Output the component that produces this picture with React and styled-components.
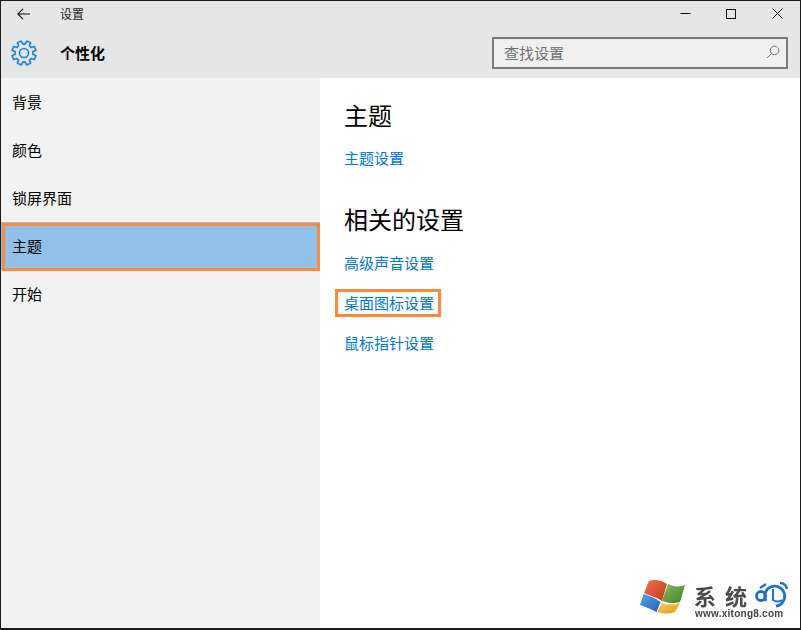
import React from "react";
import styled, { createGlobalStyle } from "styled-components";

const Global = createGlobalStyle`
  html, body { margin: 0; padding: 0; background: #fff; }
  #root { width: 801px; height: 630px; }
  * { box-sizing: border-box; }
`;
const Window = styled.div`
  width: 801px; height: 630px; display: flex; flex-direction: column; position: relative;
  border: 1px solid #1a1a1a; border-bottom-width: 2px; background: #fff; overflow: hidden;
  font-family: "Noto Sans CJK SC", "Noto Sans", sans-serif; color: #000;
`;
const Header = styled.header`
  height: 77px; flex: none; background: #e6e6e6; display: flex; flex-direction: column;
`;
const TitleBar = styled.div`
  height: 25px; display: flex; align-items: center;
`;
const BackButton = styled.div`
  width: 46px; height: 25px; display: flex; align-items: center; justify-content: center; padding-right: 1px;
`;
const TitleText = styled.span`
  margin-left: 13px; font-size: 12px; color: #222; line-height: 25px;
`;
const WindowButtons = styled.div`
  margin-left: auto; display: flex; height: 27px;
`;
const WindowButton = styled.div`
  width: 46px; height: 27px; display: flex; align-items: center; justify-content: center;
`;
const HeadRow = styled.div`
  flex: 1; display: flex; align-items: center; padding: 2px 12px 0 10px;
`;
const PageTitle = styled.h1`
  margin: 0 0 0 23px; font-size: 15px; font-weight: 700; line-height: 20px; color: #000;
`;
const SearchBox = styled.div`
  margin-left: auto; width: 296px; height: 32px; border: 2px solid #7a7a7a; background: #f0f0f0;
  display: flex; align-items: center; justify-content: space-between; padding: 0 6px 2px 10px;
  font-size: 15px; color: #707070;
`;
const Body = styled.div`
  flex: 1; display: flex; min-height: 0;
`;
const Sidebar = styled.nav`
  width: 319px; flex: none; background: #f2f2f2; display: flex; flex-direction: column;
`;
const NavItem = styled.div`
  height: 48px; display: flex; align-items: center; font-size: 15px; color: #000; position: relative;
  padding: 0 0 2px 11px;
  ${p => p.$active && `
    background: #91c1e8;
    &::after {
      content: ""; position: absolute; left: 1px; right: 0; top: 1px; bottom: -1px;
      border: 3px solid #fb8a3c;
    }
  `}
`;
const Content = styled.main`
  flex: 1; padding: 22px 0 0 24px; display: flex; flex-direction: column; align-items: flex-start;
`;
const Heading = styled.h2`
  margin: ${p => p.$gap || 0}px 0 0; font-size: 24px; font-weight: 400; line-height: 30px; color: #000;
`;
const Section = styled.section`
  display: flex; flex-direction: column; align-items: flex-start;
`;
const LinkItem = styled.a`
  display: block; margin-top: ${p => p.$gap}px; font-size: 15px; line-height: 20px; color: #0078d7;
  text-decoration: none; position: relative;
  ${p => p.$marked && `
    &::after {
      content: ""; position: absolute; left: -9px; right: -7px; top: -4px; bottom: -4px;
      border: 3px solid #fb8a3c;
    }
  `}
`;
const Watermark = styled.div`
  position: absolute; right: 0; bottom: 0; width: 170px; height: 60px;
`;
const LogoWord = styled.span`
  position: absolute; left: 64px; top: 17px; font-family: "Noto Sans CJK SC", serif; font-size: 22px; font-weight: 700;
  letter-spacing: 9px; color: #4a4a4a; line-height: 21px; white-space: nowrap; filter: blur(.5px);
`;
const LogoUrl = styled.span`
  position: absolute; left: 65px; top: 40px; font-family: "Liberation Sans", sans-serif; font-size: 10px; font-weight: 700;
  color: #444; line-height: 12px; letter-spacing: .25px; white-space: nowrap; filter: blur(.3px);
`;

const gearPath = (() => {
  const cx = 12, cy = 12, R = 11.3, r = 8.2;
  const pt = (rad, deg) => {
    const a = (deg * Math.PI) / 180;
    return `${(cx + rad * Math.cos(a)).toFixed(2)} ${(cy + rad * Math.sin(a)).toFixed(2)}`;
  };
  let d = "";
  for (let i = 0; i < 8; i++) {
    const c = i * 45 + 22.5;
    d += `${i ? "L" : "M"}${pt(r, c - 15)}L${pt(R, c - 10)}L${pt(R, c + 10)}L${pt(r, c + 15)}`;
    d += `A${r} ${r} 0 0 1 ${pt(r, c + 30)}`;
  }
  return d + "Z";
})();

const Arrow = () => (
  <svg width="14" height="12" viewBox="0 0 14 12" fill="none" stroke="#111" strokeWidth="1.1">
    <path d="M0.8 6H13M6 0.8L0.8 6l5.2 5.2" />
  </svg>
);
const Minimize = () => (
  <svg width="11" height="11" viewBox="0 0 11 11"><path d="M0.5 5.5H10.5" stroke="#111" /></svg>
);
const Maximize = () => (
  <svg width="10" height="10" viewBox="0 0 10 10" fill="none"><rect x=".5" y=".5" width="9" height="9" stroke="#111" /></svg>
);
const Close = () => (
  <svg width="11" height="11" viewBox="0 0 11 11" fill="none"><path d="M.5.5l10 10M10.5.5l-10 10" stroke="#111" /></svg>
);
const Gear = () => (
  <svg width="26" height="26" viewBox="0 0 24 24" fill="none" stroke="#1a85e0" strokeWidth="1.5" strokeLinejoin="round">
    <path d={gearPath} />
    <circle cx="12" cy="12" r="4.200" />
  </svg>
);
const SearchIcon = () => (
  <svg width="14" height="14" viewBox="0 0 14 14" fill="none" stroke="#777" strokeWidth="1">
    <circle cx="8.600" cy="5.400" r="4.300" /><path d="M5.500 8.500L1 13" />
  </svg>
);
const Flag = () => (
  <svg style={{ position: "absolute", left: 10, top: 10, filter: "blur(.4px)" }} width="46" height="36" viewBox="0 0 46 36">
    <defs>
      <linearGradient id="r" x1="0" y1="0" x2="1" y2="1"><stop offset="0" stopColor="#e8764a" /><stop offset="1" stopColor="#c8341c" /></linearGradient>
      <linearGradient id="g" x1="0" y1="0" x2="1" y2="1"><stop offset="0" stopColor="#8cc060" /><stop offset="1" stopColor="#3f7d22" /></linearGradient>
      <linearGradient id="b" x1="0" y1="0" x2="1" y2="1"><stop offset="0" stopColor="#5aa6e8" /><stop offset="1" stopColor="#1a5fb8" /></linearGradient>
      <linearGradient id="y" x1="0" y1="0" x2="1" y2="1"><stop offset="0" stopColor="#f8cf60" /><stop offset="1" stopColor="#e09a18" /></linearGradient>
    </defs>
    <path d="M9 3c6-2 12-1 18 3l-5 17c-5-4-12-5-18-8z" fill="url(#r)" />
    <path d="M28 6c6 3 12 3 17 1l-5 17c-6 2-12 1-18-1z" fill="url(#g)" />
    <path d="M3.500 16c6 2 12 4 17 8l-4 10c-5-3-11-5-16.500-7z" fill="url(#b)" />
    <path d="M22 25c6 2 12 2 18 0l-5 9c-6 2-12 2-18 0z" fill="url(#y)" />
  </svg>
);
const Bar = () => (
  <svg style={{ position: "absolute", left: 125, top: 13, filter: "blur(.3px)" }} width="34" height="28" viewBox="0 0 34 28" fill="none" stroke="#1d72c8" strokeWidth="2.800">
    <circle cx="6" cy="15" r="4.500" />
    <path d="M11 20A10 10 0 1 1 21 25" />
    <path d="M18 8v11c3 2 6 2 9 0" strokeWidth="2" />
    <path d="M5 7l6-4M25 2c3 0 6 2 7 6" strokeWidth="2.400" />
  </svg>
);

export default function App() {
  return (
    <>
      <Global />
      <Window>
        <Header>
          <TitleBar>
            <BackButton><Arrow /></BackButton>
            <TitleText>设置</TitleText>
            <WindowButtons>
              <WindowButton><Minimize /></WindowButton>
              <WindowButton><Maximize /></WindowButton>
              <WindowButton><Close /></WindowButton>
            </WindowButtons>
          </TitleBar>
          <HeadRow>
            <Gear />
            <PageTitle>个性化</PageTitle>
            <SearchBox>查找设置<SearchIcon /></SearchBox>
          </HeadRow>
        </Header>
        <Body>
          <Sidebar>
            <NavItem>背景</NavItem>
            <NavItem>颜色</NavItem>
            <NavItem>锁屏界面</NavItem>
            <NavItem $active>主题</NavItem>
            <NavItem>开始</NavItem>
          </Sidebar>
          <Content>
            <Section>
              <Heading>主题</Heading>
              <LinkItem $gap={18}>主题设置</LinkItem>
            </Section>
            <Section>
              <Heading $gap={36}>相关的设置</Heading>
              <LinkItem $gap={19}>高级声音设置</LinkItem>
              <LinkItem $marked $gap={20}>桌面图标设置</LinkItem>
              <LinkItem $gap={20}>鼠标指针设置</LinkItem>
            </Section>
          </Content>
        </Body>
        <Watermark>
          <Flag />
          <LogoWord>系统</LogoWord>
          <LogoUrl>www.xitong8.com</LogoUrl>
          <Bar />
        </Watermark>
      </Window>
    </>
  );
}
